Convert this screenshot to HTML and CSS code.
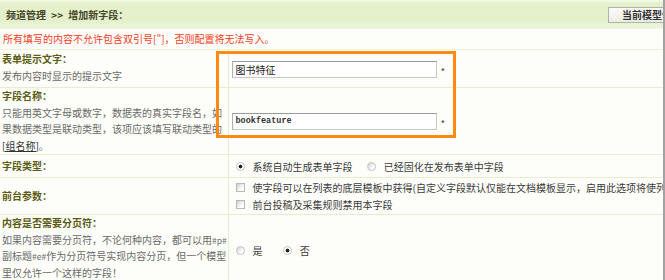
FILE: index.html
```html
<!DOCTYPE html>
<html lang="zh-CN">
<head>
    <meta charset="UTF-8">
    <title>增加新字段</title>
    <link rel="stylesheet" href="styles.css">
</head>
<body>
    <div class="frame">
        <!-- Title bar -->
        <div class="title-bar">
            <span class="crumb">频道管理 &gt;&gt; 增加新字段：</span>
            <button class="model-btn">当前模型信息</button>
        </div>

        <div class="notice">所有填写的内容不允许包含双引号["]，否则配置将无法写入。</div>

        <table class="field-table">
            <colgroup>
                <col class="col-label">
                <col>
            </colgroup>
            <tr class="row-tip">
                <td class="label">
                    <strong>表单提示文字：</strong><br>
                    <span class="desc">发布内容时显示的提示文字</span>
                </td>
                <td class="value">
                    <input type="text" class="txt" value="图书特征"> <span class="req">*</span>
                </td>
            </tr>
            <tr class="row-name">
                <td class="label">
                    <strong>字段名称：</strong><br>
                    <span class="desc">只能用英文字母或数字，数据表的真实字段名，如果数据类型是联动类型，该项应该填写联动类型的<u>[组名称]</u>。</span>
                </td>
                <td class="value">
                    <input type="text" class="txt mono" value="bookfeature"> <span class="req">*</span>
                </td>
            </tr>
            <tr class="row-type">
                <td class="label"><strong>字段类型：</strong></td>
                <td class="value">
                    <label class="opt"><input type="radio" name="ftype" checked>系统自动生成表单字段</label>
                    <label class="opt"><input type="radio" name="ftype">已经固化在发布表单中字段</label>
                </td>
            </tr>
            <tr class="row-front">
                <td class="label"><strong>前台参数：</strong></td>
                <td class="value">
                    <label class="opt line"><input type="checkbox">使字段可以在列表的底层模板中获得(自定义字段默认仅能在文档模板显示，启用此选项将使列表</label>
                    <label class="opt line"><input type="checkbox">前台投稿及采集规则禁用本字段</label>
                </td>
            </tr>
            <tr class="row-page">
                <td class="label">
                    <strong>内容是否需要分页符：</strong><br>
                    <span class="desc">如果内容需要分页符，不论何种内容，都可以用<span class="tag">#p#</span>副标题<span class="tag">#e#</span>作为分页符号实现内容分页，但一个模型里仅允许一个这样的字段！</span>
                </td>
                <td class="value">
                    <label class="opt"><input type="radio" name="ispage">是</label>
                    <label class="opt"><input type="radio" name="ispage" checked>否</label>
                </td>
            </tr>
        </table>

        <!-- highlight box drawn over the two inputs -->
        <div class="mark"></div>
    </div>
</body>
</html>
```

FILE: styles.css
```css
/* Global styles */
body {
    margin: 0;
    padding: 0;
    background: #fff;
    font-family: "Noto Sans CJK SC", "Noto Sans", sans-serif;
    font-size: 10px;
    color: #444;
}

.frame {
    position: relative;
    width: 663px;
    height: 280px;
    overflow: hidden;
    border-right: 2px solid #a3a3a3;
    background: #fdfef9;
}

/* Title bar */
.title-bar {
    height: 29px;
    display: flex;
    align-items: center;
    justify-content: space-between;
    background: linear-gradient(#f6faee 0, #e4f1cb 12%, #e3f0c9 70%, #eef6e0 100%);
}

.crumb {
    padding-left: 6px;
    font-weight: bold;
    color: #45452a;
    line-height: 1;
    word-spacing: 3px;
}

.model-btn {
    height: 16px;
    margin-right: -24px;
    padding: 0 4px 0 13px;
    font-family: inherit;
    font-size: 10px;
    font-weight: bold;
    color: #333;
    white-space: nowrap;
    background: linear-gradient(#fbfbf8, #ecece6);
    border: 1px solid #b2b2a6;
    border-radius: 0;
    line-height: 14px;
}

.notice {
    height: 20px;
    line-height: 20px;
    padding-left: 3px;
    color: #f53b22;
    background: #fdfefa;
    border-bottom: 1px solid #eaf1d4;
}

/* Field table */
.field-table {
    width: 663px;
    border-collapse: collapse;
    table-layout: fixed;
}

.col-label {
    width: 228px;
}

.field-table td {
    border-bottom: 1px solid #e6efcc;
    padding: 0;
}

.label {
    padding: 0 0 0 2px !important;
    border-right: 1px solid #e6efcc;
    line-height: 16.5px;
    vertical-align: top;
}

.label strong {
    color: #5b5b14;
}

.desc {
    color: #6a6a6a;
}

.desc u {
    color: #333;
}

.tag {
    font-size: 8.5px;
}

.value {
    padding-left: 3px !important;
    vertical-align: middle;
    white-space: nowrap;
}

.row-tip td {
    height: 36px;
    padding-top: 1px !important;
}

.row-name td {
    height: 65px;
}

.row-type td {
    height: 22px;
}

.row-type .label,
.row-front .label {
    vertical-align: middle;
}

.row-front td {
    height: 36px;
}

.row-page td {
    height: 70px;
}

/* Inputs */
.txt {
    width: 205px;
    height: 17px;
    box-sizing: border-box;
    margin: 0;
    padding: 0 3px;
    font-family: inherit;
    font-size: 10px;
    color: #222;
    background: #fff;
    border: 1px solid #c9c9c9;
    border-top-color: #9a9a9a;
    border-left-color: #b0b0b0;
    vertical-align: middle;
}

.txt.mono {
    font-family: "Liberation Mono", monospace;
    font-size: 8.5px;
    font-weight: bold;
    color: #333;
}

.req {
    margin-left: 2px;
    font-size: 9px;
    color: #333;
    vertical-align: -3px;
}

/* Radios and checkboxes */
.opt {
    display: inline-flex;
    align-items: center;
    margin-right: 8px;
    color: #3a3a3a;
}

.opt.line {
    display: flex;
    height: 17px;
}

.opt input {
    appearance: none;
    -webkit-appearance: none;
    width: 9px;
    height: 9px;
    margin: 0 8px 0 4px;
    background: linear-gradient(135deg, #d0d0d0, #ffffff 70%);
    border: 1px solid #b8b8b8;
    box-sizing: border-box;
    flex: none;
}

.opt input[type="radio"] {
    border-radius: 50%;
    border-color: #c2c2c2;
}

.opt input[type="radio"]:checked {
    background: radial-gradient(circle, #222 0 1.7px, #fff 2.2px);
}

.row-page .opt {
    margin-right: 14px;
}

/* Highlight box */
.mark {
    position: absolute;
    left: 216px;
    top: 51px;
    width: 234px;
    height: 81px;
    border: 3px solid #ff8a12;
}
```
